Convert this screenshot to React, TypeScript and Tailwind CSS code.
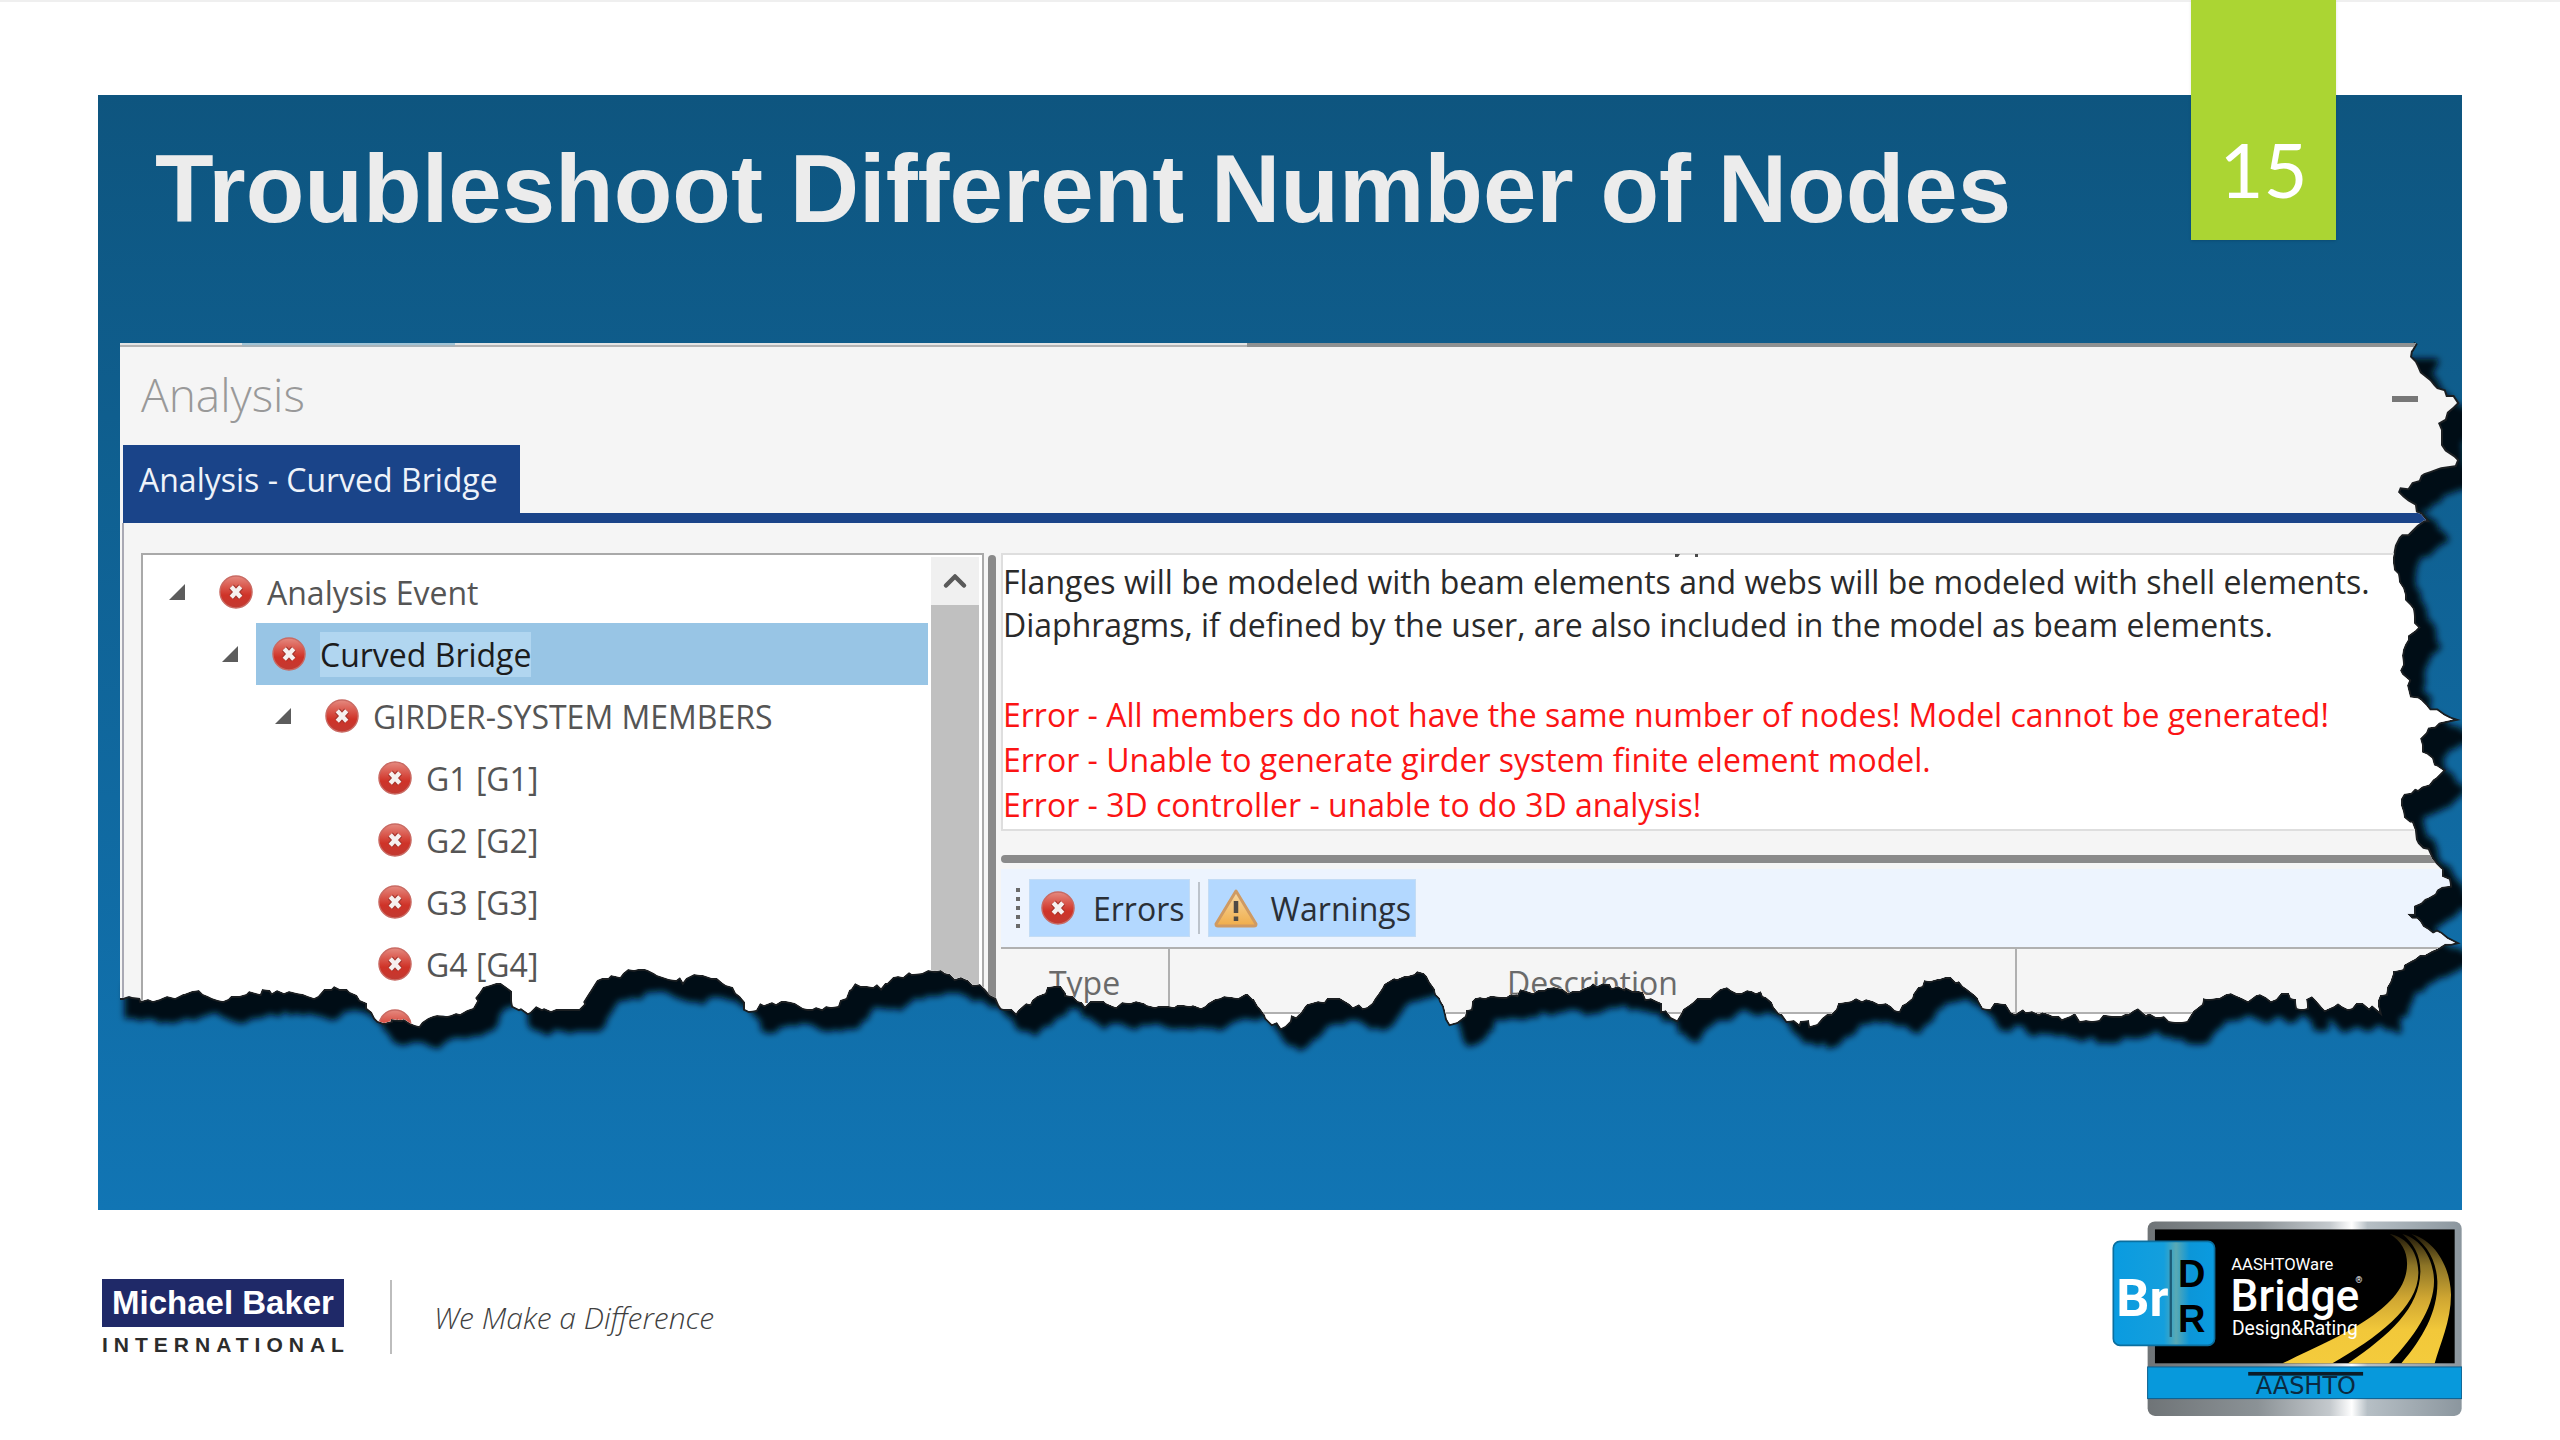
import { ChevronUp } from 'lucide-react';

type Node = { label: string; selected?: boolean; children?: Node[] };

const TREE: Node[] = [
  {
    label: 'Analysis Event',
    children: [
      {
        label: 'Curved Bridge',
        selected: true,
        children: [
          {
            label: 'GIRDER-SYSTEM MEMBERS',
            children: [
              { label: 'G1 [G1]' },
              { label: 'G2 [G2]' },
              { label: 'G3 [G3]' },
              { label: 'G4 [G4]' },
              { label: 'G5 [G5]' },
            ],
          },
        ],
      },
    ],
  },
];

const ERRORS = [
  'Error - All members do not have the same number of nodes! Model cannot be generated!',
  'Error - Unable to generate girder system finite element model.',
  'Error - 3D controller - unable to do 3D analysis!',
];

// torn paper outline, drawn in a 2342 x 713 box
const W = 2342;
const H = 713;
const RIGHT = [
  [2296, 0], [2290, 14], [2297, 23], [2305, 34], [2317, 46], [2337, 60], [2327, 69], [2318, 80], [2321, 87], [2321, 96],
  [2325, 108], [2337, 117], [2328, 123], [2310, 128], [2292, 139], [2278, 149], [2288, 158], [2295, 162], [2296, 169],
  [2306, 177], [2293, 186], [2282, 191], [2275, 202], [2273, 220], [2279, 239], [2285, 257], [2293, 266], [2294, 280],
  [2298, 284], [2288, 292], [2282, 312], [2282, 331], [2289, 337], [2290, 354], [2317, 367], [2333, 376], [2315, 383],
  [2300, 395], [2302, 409], [2323, 427], [2313, 436], [2295, 445], [2281, 455], [2283, 468], [2295, 487], [2303, 505],
  [2317, 521], [2330, 542], [2317, 546], [2287, 570], [2303, 583], [2335, 599], [2312, 607], [2295, 615], [2273, 627],
  [2267, 643], [2258, 663],
];
const BOTTOM = [
  [2259, 667], [2243, 659], [2228, 665], [2218, 659], [2205, 666], [2192, 652], [2182, 665], [2169, 649], [2151, 657],
  [2140, 650], [2128, 657], [2106, 650], [2083, 654], [2067, 677], [2049, 677], [2044, 672], [2014, 666], [1993, 672],
  [1960, 677], [1955, 669], [1942, 675], [1912, 667], [1891, 668], [1886, 660], [1863, 664], [1858, 654], [1843, 642],
  [1825, 633], [1804, 636], [1792, 654], [1779, 667], [1759, 660], [1746, 655], [1718, 659], [1697, 680], [1667, 677],
  [1641, 647], [1600, 645], [1590, 654], [1577, 654], [1557, 676], [1531, 654], [1498, 642], [1473, 639], [1452, 647],
  [1427, 644], [1391, 650], [1355, 654], [1345, 672], [1330, 680], [1320, 654], [1304, 629], [1274, 634], [1258, 650],
  [1243, 664], [1207, 654], [1187, 660], [1161, 684], [1146, 674], [1128, 650], [1095, 655], [1085, 662], [1044, 662],
  [1016, 657], [993, 662], [978, 657], [965, 662], [953, 652], [934, 642], [917, 652], [896, 669], [881, 664],
  [872, 652], [860, 640], [845, 635], [830, 630], [815, 627], [778, 632], [761, 644], [735, 639], [726, 654],
  [718, 662], [692, 665], [666, 657], [640, 659], [629, 667], [620, 652], [597, 634], [574, 630], [563, 638],
  [525, 625], [482, 634], [468, 650], [459, 665], [431, 667], [416, 662], [408, 669], [393, 662], [388, 644],
  [376, 639], [359, 649], [353, 664], [336, 669], [313, 672], [299, 682], [284, 675], [258, 677], [247, 659],
  [227, 645], [204, 645], [198, 652], [164, 649], [129, 647], [103, 657], [92, 654], [72, 647], [55, 654],
  [28, 655], [3, 654], [0, 654],
];

// break every edge into short uneven steps
function roughen(points: number[][]) {
  const out: number[][] = [];
  let seed = 7;
  const rnd = () => {
    seed = (seed * 16807) % 2147483647;
    return seed / 2147483647 - 0.5;
  };
  points.forEach(([x, y], i) => {
    out.push([x, y]);
    const next = points[i + 1];
    if (!next) return;
    const n = Math.floor(Math.hypot(next[0] - x, next[1] - y) / 5);
    for (let k = 1; k < n; k++) {
      out.push([x + ((next[0] - x) * k) / n + rnd() * 5, y + ((next[1] - y) * k) / n + rnd() * 6]);
    }
  });
  return out.map((p) => p.map(Math.round).join(' ')).join(' L');
}

const TEAR = roughen([...RIGHT, ...BOTTOM]);
const SHEET = `M0 0 L${TEAR} Z`;

function TornShadow() {
  return (
    <svg className="absolute inset-0 h-full w-full overflow-visible" viewBox={`0 0 ${W} ${H}`} preserveAspectRatio="none" aria-hidden="true">
      <defs>
        <clipPath id="torn" clipPathUnits="objectBoundingBox">
          <path d={SHEET} transform={`scale(${1 / W} ${1 / H})`} />
        </clipPath>
        <filter id="soft" x="-5%" y="-5%" width="110%" height="110%">
          <feGaussianBlur stdDeviation="3" />
        </filter>
      </defs>
      <g fill="#010d14" stroke="#010d14" filter="url(#soft)">
        <path d={SHEET} strokeWidth="7" strokeLinejoin="round" transform="translate(19 19)" />
        <path d="M5 640 H50 V674 H5 Z" />
      </g>
      <path d={`M${TEAR}`} fill="none" stroke="#1b1f22" strokeWidth="4" />
    </svg>
  );
}

function ErrorIcon() {
  return (
    <svg viewBox="0 0 36 36" className="size-[34px] shrink-0" aria-hidden="true">
      <defs>
        <linearGradient id="err" x1="0" y1="0" x2="0" y2="1">
          <stop offset="0" stopColor="#e58a80" />
          <stop offset="0.35" stopColor="#d9564b" />
          <stop offset="0.6" stopColor="#cf3328" />
          <stop offset="1" stopColor="#c13a32" />
        </linearGradient>
      </defs>
      <circle cx="18" cy="18" r="17" fill="url(#err)" stroke="#c96a63" strokeWidth="1.5" />
      <path d="M13 12.5 L23 23.5 M23 12.5 L13 23.5" stroke="#a5352d" strokeWidth="7" />
      <path d="M13 12.5 L23 23.5 M23 12.5 L13 23.5" stroke="#f6f0ef" strokeWidth="4.6" />
    </svg>
  );
}

function WarningIcon() {
  return (
    <svg viewBox="0 0 46 40" className="h-10 w-[46px] shrink-0" aria-hidden="true">
      <defs>
        <linearGradient id="warn" x1="0" y1="0" x2="0" y2="1">
          <stop offset="0" stopColor="#f7d9a4" />
          <stop offset="1" stopColor="#f0ad4a" />
        </linearGradient>
      </defs>
      <path d="M23 3 L43 36 Q43 38 41 38 H5 Q3 38 3 36 Z" fill="url(#warn)" stroke="#cf9a62" strokeWidth="3" strokeLinejoin="round" />
      <path d="M23 13 V25" stroke="#4f4a45" strokeWidth="4.5" />
      <path d="M23 28.5 V33" stroke="#4f4a45" strokeWidth="4.5" />
    </svg>
  );
}

function TreeList({ nodes }: { nodes: Node[] }) {
  return (
    <ul>
      {nodes.map((n) => (
        <li key={n.label}>
          <div className="flex h-[62px] items-center">
            <svg viewBox="0 0 18 18" className="mr-[17px] size-[18px] shrink-0" aria-hidden="true">
              {n.children && <path d="M17 1 V17 H1 Z" fill="#5c5c5c" />}
            </svg>
            <div className={`flex h-full flex-1 items-center gap-[14px] pl-4 ${n.selected ? 'bg-[#98c5e5] text-[#1c1c1c]' : 'text-[#555555]'}`}>
              <ErrorIcon />
              <span className={n.selected ? 'bg-[#b1d6f0]' : ''}>{n.label}</span>
            </div>
          </div>
          {n.children && (
            <div className="pl-[53px]">
              <TreeList nodes={n.children} />
            </div>
          )}
        </li>
      ))}
    </ul>
  );
}

function AnalysisWindow() {
  return (
    <div className="relative ml-[22px]">
      <TornShadow />
      <div className="relative bg-[#f5f5f5] font-['Open_Sans',sans-serif] text-[32px] leading-[45px] [clip-path:url(#torn)]">
        <div className="flex h-1">
          <div className="w-[122px] border-b-2 border-[#b4b4b4] bg-[#e4e4e4]" />
          <div className="w-[213px] border-b-2 border-[#a9b4ba] bg-[#9fc3d6]" />
          <div className="w-[792px] border-b-2 border-[#b4b4b4] bg-[#e4e4e4]" />
          <div className="flex-1 bg-[#8e9192]" />
        </div>
        <div className="flex h-[98px] items-center justify-between pr-[44px] pb-1 pl-[21px]">
          <h2 className="text-[46px] leading-[60px] font-light text-[#999999]">Analysis</h2>
          <button aria-label="Minimize" className="flex h-8 items-end pb-2">
            <span className="h-[6px] w-[26px] bg-[#777777]" />
          </button>
        </div>
        <div className="ml-[3px] border-b-10 border-[#1a4489]">
          <button className="h-[68px] bg-[#1a4489] pr-[22px] pl-4 text-[#eef3fa]">Analysis - Curved Bridge</button>
        </div>

        <div className="ml-[2px] flex border-l-2 border-[#a9a9b4] pt-[30px]">
          <div className="ml-[17px] flex w-[843px] border-2 border-b-0 border-[#a9a9a9] bg-white">
            <div className="flex-1 pt-[6px] pr-[3px] pl-[25px]">
              <TreeList nodes={TREE} />
            </div>
            <div className="mt-[2px] mr-[3px] flex w-12 flex-col bg-[#c0c0c0]">
              <button aria-label="Scroll up" className="flex h-12 items-center justify-center bg-[#f0f0f0] text-[#5a5a5a]">
                <ChevronUp size={36} strokeWidth={3} />
              </button>
            </div>
          </div>
          <div className="mt-[2px] ml-1 w-2 rounded-t bg-[#8a8a8a]" />

          <div className="ml-[5px] flex flex-1 flex-col">
            <div className="border-2 border-[#dedede] bg-white pt-[5px] pb-[2px]">
              <p className="leading-[43px] text-[#2a2a2a]">
                Flanges will be modeled with beam elements and webs will be modeled with shell elements.
                <br />
                Diaphragms, if defined by the user, are also included in the model as beam elements.
              </p>
              <div className="mt-[46px] text-[#fb1414]">
                {ERRORS.map((e) => (
                  <p key={e}>{e}</p>
                ))}
              </div>
            </div>
            <div className="mt-6 mb-[6px] h-2 rounded-l bg-[#8a8a8a]" />
            <div className="flex h-[78px] items-center bg-[#edf4fe] pl-[15px]">
              <div className="flex flex-col gap-[5px]">
                {[0, 1, 2, 3, 4].map((i) => (
                  <div key={i} className="size-1 bg-[#6a6a6a]" />
                ))}
              </div>
              <button className="ml-[9px] flex h-[58px] items-center gap-[18px] border border-[#c3dcf5] bg-[#b3d8ff] pr-1 pl-[11px] text-[#2a2f36]">
                <ErrorIcon />
                Errors
              </button>
              <div className="mx-2 h-[52px] w-[2px] bg-[#bcc3cc]" />
              <button className="flex h-[58px] items-center gap-3 border border-[#c3dcf5] bg-[#b3d8ff] pr-1 pl-1 text-[#2a2f36]">
                <WarningIcon />
                Warnings
              </button>
            </div>
            <div className="flex-1 bg-white">
              <table className="w-full table-fixed border-collapse border-y-2 border-[#b0b0b0] bg-[#f5f5f5] text-[#6a6a6a]">
                <thead>
                  <tr className="h-[65px]">
                    <th className="w-[168px] border-r-2 border-[#b0b0b0] pt-1 font-normal">Type</th>
                    <th className="w-[847px] border-r-2 border-[#b0b0b0] pt-1 font-normal">Description</th>
                    <th />
                  </tr>
                </thead>
              </table>
            </div>
          </div>
        </div>

        {/* descender tips of the line scrolled out above the log */}
        <svg className="absolute top-[210px] left-[1555px] h-[5px] w-7" viewBox="0 0 28 5" aria-hidden="true">
          <path d="M0 1 H5 L3 4 H0 Z M20 1 H23 V4 H20 Z" fill="#4a4a4a" />
        </svg>
      </div>
    </div>
  );
}

function BridgeLogo() {
  return (
    <svg viewBox="60 50 1057 600" className="h-[200px] w-[352px]" role="img" aria-label="AASHTOWare Bridge Design and Rating">
      <defs>
        <linearGradient id="steel" x1="0" x2="1">
          <stop offset="0" stopColor="#6f7477" />
          <stop offset="0.35" stopColor="#8b9296" />
          <stop offset="0.58" stopColor="#c4c9cd" />
          <stop offset="0.65" stopColor="#ffffff" />
          <stop offset="0.7" stopColor="#b6bfc5" />
          <stop offset="1" stopColor="#8b969e" />
        </linearGradient>
        <linearGradient id="gold" x1="0" y1="95" x2="0" y2="485" gradientUnits="userSpaceOnUse">
          <stop offset="0" stopColor="#1a1408" />
          <stop offset="0.25" stopColor="#8c7426" />
          <stop offset="0.5" stopColor="#cfa632" />
          <stop offset="0.75" stopColor="#f2c83a" />
          <stop offset="1" stopColor="#f4cb3c" />
        </linearGradient>
        <linearGradient id="badge" x1="0" x2="1">
          <stop offset="0" stopColor="#0a9be0" />
          <stop offset="0.5" stopColor="#149fdd" />
          <stop offset="0.62" stopColor="#5aa9b4" />
          <stop offset="0.75" stopColor="#0c96d8" />
          <stop offset="1" stopColor="#0a9be0" />
        </linearGradient>
      </defs>
      <rect x="173" y="60" width="943" height="584" rx="22" fill="url(#steel)" />
      <rect x="195" y="84" width="900" height="402" fill="#000" />
      <g fill="url(#gold)">
        <path d="M578 486 C760 400 950 320 952 190 C953 150 935 120 900 98 C940 105 985 140 986 215 C985 320 860 410 728 486 Z" />
        <path d="M775 486 C900 400 990 320 992 210 C992 160 970 125 938 98 C985 110 1030 160 1033 235 C1035 320 970 410 898 486 Z" />
        <path d="M935 486 C1000 410 1045 330 1043 240 C1040 170 1005 125 965 98 C1030 115 1082 190 1084 280 C1084 360 1050 430 1035 486 Z" />
      </g>
      <g fill="#fff" fontFamily="Roboto, sans-serif">
        <text x="424" y="205" fontSize="50">AASHTOWare</text>
        <text x="422" y="328" fontSize="133" fontWeight="500">Bridge</text>
        <text x="797" y="245" fontSize="26">®</text>
        <text x="426" y="402" fontSize="58">Design&amp;Rating</text>
      </g>
      <rect x="173" y="497" width="943" height="95" fill="#0799dc" stroke="#0a5f8f" strokeWidth="3" />
      <rect x="475" y="512" width="345" height="11" fill="#0b1c28" />
      <text x="648" y="579" textAnchor="middle" fontFamily="DejaVu Sans, sans-serif" fontSize="72" fill="#0b2a40">AASHTO</text>
      <rect x="70" y="120" width="304" height="312" rx="20" fill="url(#badge)" stroke="#0b6f9f" strokeWidth="5" />
      <rect x="239" y="145" width="7" height="262" fill="#1d5c78" />
      <g fontFamily="Roboto, sans-serif" fontWeight="700">
        <text x="79" y="343" fontSize="156" fill="#fff">Br</text>
        {/* the two initials stack inside the badge */}
        <g fontFamily="Liberation Sans, sans-serif" fontSize="114">
          <text x="264" y="258" fill="#000">D</text>
          <text x="264" y="392" fill="#000">R</text>
        </g>
      </g>
    </svg>
  );
}

export default function App() {
  return (
    <div className="relative min-h-screen border-t-2 border-[#efefef] bg-white px-[98px] pt-[93px] font-['Liberation_Sans',Arial,sans-serif]">
      <main className="overflow-hidden bg-linear-to-b from-[#0e557f] to-[#1175b4] pb-[153px]">
        <header className="h-[248px] pt-[38px] pl-[57px]">
          <h1 className="text-[96px] leading-[112px] font-bold text-[#ececec]">Troubleshoot Different Number of Nodes</h1>
        </header>
        <AnalysisWindow />
      </main>

      <div className="absolute -top-[2px] right-[224px] flex h-[240px] w-[145px] justify-center bg-[#abd533] pt-[125px] font-[Lato,sans-serif] text-[76px] leading-[88px] text-white shadow">
        15
      </div>

      <footer className="flex items-start justify-between pt-2">
        <div className="mt-[61px] ml-1 flex items-center">
          <div className="font-bold">
            <div className="flex h-12 w-[242px] items-center justify-center bg-[#1f2968] text-[33px] text-white">Michael Baker</div>
            <div className="mt-2 text-[21px] leading-5 tracking-[6px] text-[#2c2c2c]">INTERNATIONAL</div>
          </div>
          <div className="ml-[40px] h-[74px] w-[2px] bg-[#bdbdbd]" />
          <p className="ml-[42px] font-['Open_Sans',sans-serif] text-[30px] font-light text-[#3f3f3f] italic">We Make a Difference</p>
        </div>
        <BridgeLogo />
      </footer>
    </div>
  );
}
